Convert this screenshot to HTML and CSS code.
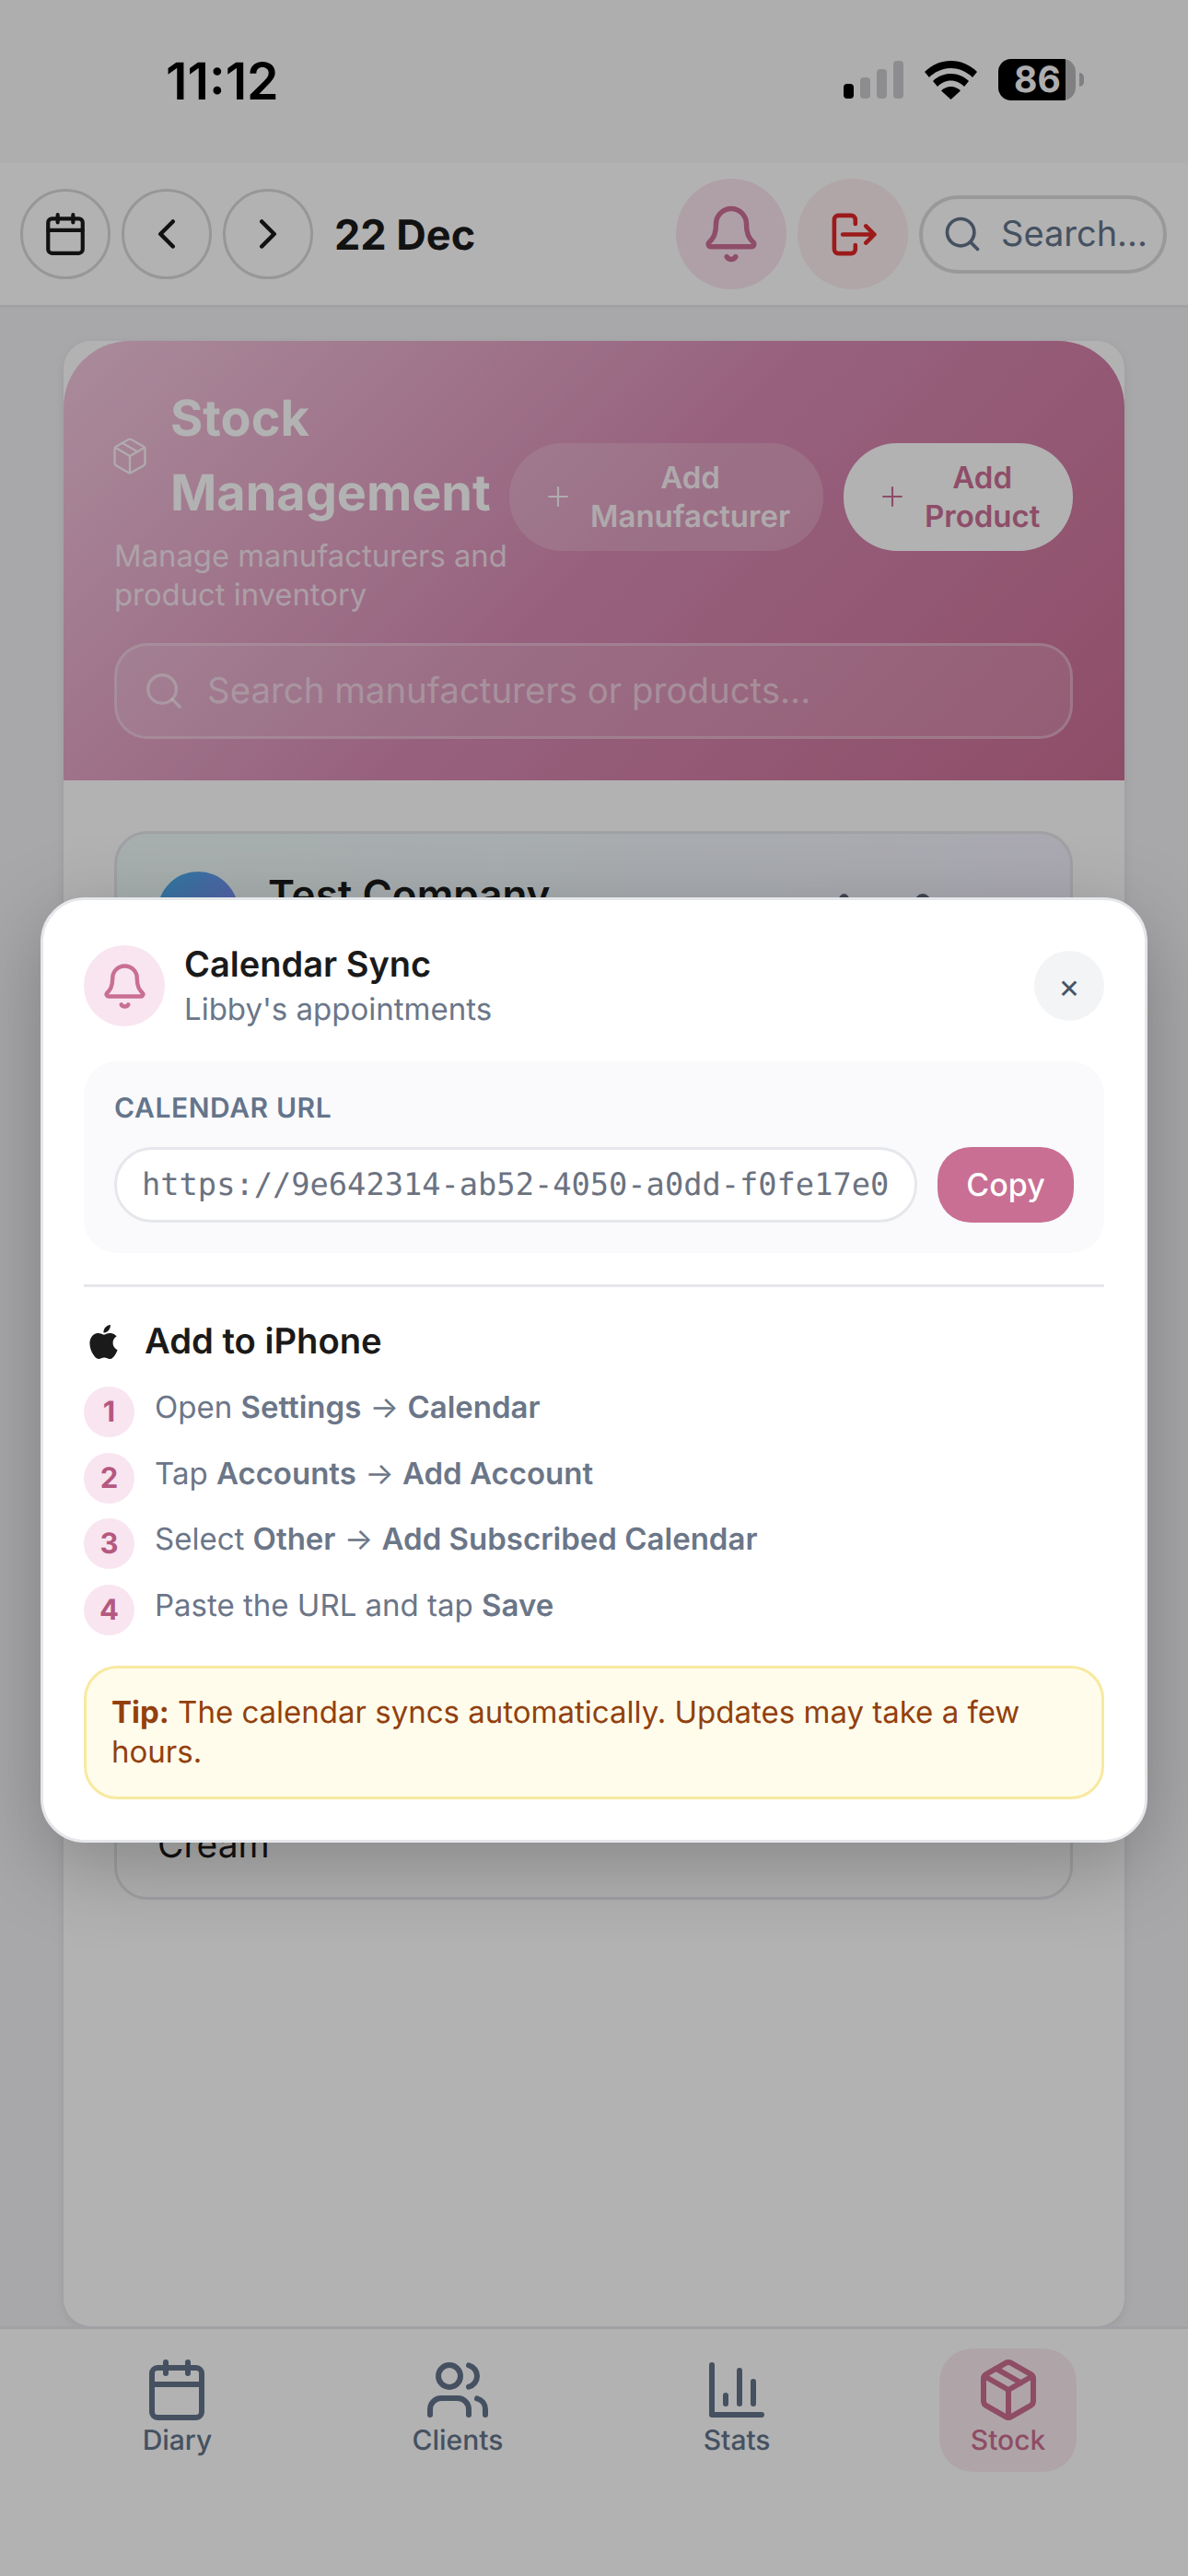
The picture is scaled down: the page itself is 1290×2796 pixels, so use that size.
FILE: index.html
```html
<!DOCTYPE html>
<html lang="en">
<head>
    <meta charset="UTF-8">
    <meta name="viewport" content="width=device-width, initial-scale=1.0">
    <title>Stock Management</title>
    <link rel="stylesheet" href="styles.css">
</head>
<body>

    <div class="status-bar">
        <span class="time">11:12</span>
        <div class="status-icons">
            <div class="signal">
                <span class="bar bar-1"></span>
                <span class="bar bar-2"></span>
                <span class="bar bar-3"></span>
                <span class="bar bar-4"></span>
            </div>
            <svg class="wifi" viewBox="0 0 57 42">
                <path d="M28.5 0C17.5 0 7.5 4.5 0 12l5 6c6-6 14.500-10 23.500-10S46 12 52 18l5-6C49.500 4.500 39.500 0 28.500 0z"/>
                <path d="M28.500 14c-7.500 0-14.500 3-19.500 8l5 6c4-4 9-6.500 14.500-6.500S39 24 43 28l5-6c-5-5-12-8-19.500-8z"/>
                <path d="M28.500 28c-4 0-7.500 1.500-10.500 4.500L28.500 42 39 32.500c-3-3-6.500-4.500-10.500-4.500z"/>
            </svg>
            <div class="battery">
                <div class="battery-body">86</div>
                <span class="battery-nub"></span>
            </div>
        </div>
    </div>

    <header class="top-bar">
        <button class="round-btn">
            <svg class="icon-cal" viewBox="0 0 24 24"><rect x="3" y="4" width="18" height="18" rx="2"/><path d="M16 2v4M8 2v4M3 10h18"/></svg>
        </button>
        <button class="round-btn">
            <svg class="icon-chev" viewBox="0 0 24 24"><path d="m15 18-6-6 6-6"/></svg>
        </button>
        <button class="round-btn">
            <svg class="icon-chev" viewBox="0 0 24 24"><path d="m9 18 6-6-6-6"/></svg>
        </button>
        <span class="date">22 Dec</span>
        <div class="top-actions">
            <button class="action-btn bell-btn">
                <svg class="icon-bell" viewBox="0 0 24 24"><path d="M10.268 21a2 2 0 0 0 3.464 0"/><path d="M3.262 15.326A1 1 0 0 0 4 17h16a1 1 0 0 0 .74-1.673C19.41 13.956 18 12.499 18 8A6 6 0 0 0 6 8c0 4.499-1.411 5.956-2.738 7.326"/></svg>
            </button>
            <button class="action-btn logout-btn">
                <svg class="icon-logout" viewBox="0 0 24 24"><path d="M13 7V5a2 2 0 0 0-2-2H5a2 2 0 0 0-2 2v14a2 2 0 0 0 2 2h6a2 2 0 0 0 2-2v-2"/><path d="M7 12h15M18 8l4 4-4 4"/></svg>
            </button>
            <div class="top-search">
                <svg class="icon-search" viewBox="0 0 24 24"><circle cx="11" cy="11" r="8"/><path d="m21 21-4.3-4.3"/></svg>
                <span class="top-search-text">Search...</span>
            </div>
        </div>
    </header>

    <main class="content">
        <section class="stock-card">
            <div class="stock-head">
                <div class="stock-head-row">
                    <div class="stock-title-block">
                        <div class="stock-title">
                            <svg class="icon-box" viewBox="0 0 24 24"><path d="M11 21.73a2 2 0 0 0 2 0l7-4A2 2 0 0 0 21 16V8a2 2 0 0 0-1-1.73l-7-4a2 2 0 0 0-2 0l-7 4A2 2 0 0 0 3 8v8a2 2 0 0 0 1 1.73z"/><path d="M12 22V12"/><path d="m3.3 7 8.7 5 8.7-5"/><path d="m7.5 4.27 9 5.15"/></svg>
                            <h1>Stock Management</h1>
                        </div>
                        <p class="stock-sub">Manage manufacturers and product inventory</p>
                    </div>
                    <div class="stock-buttons">
                        <button class="add-btn add-ghost">
                            <svg class="icon-plus" viewBox="0 0 24 24"><path d="M5 12h14M12 5v14"/></svg>
                            <span>Add<br>Manufacturer</span>
                        </button>
                        <button class="add-btn add-solid">
                            <svg class="icon-plus" viewBox="0 0 24 24"><path d="M5 12h14M12 5v14"/></svg>
                            <span>Add<br>Product</span>
                        </button>
                    </div>
                </div>
                <div class="stock-search">
                    <svg class="icon-stock-search" viewBox="0 0 24 24"><circle cx="11" cy="11" r="8"/><path d="m21 21-4.3-4.3"/></svg>
                    <span>Search manufacturers or products...</span>
                </div>
            </div>

            <div class="stock-body">
                <div class="company-card">
                    <div class="company-row">
                        <div class="company-avatar"></div>
                        <span class="company-name">Test Company</span>
                        <div class="company-tools">
                            <span class="tool tool-small"></span>
                            <span class="tool tool-wide"></span>
                        </div>
                    </div>
                    <div class="product-name">Cream</div>
                </div>
            </div>
        </section>
    </main>

    <nav class="tab-bar">
        <a class="tab">
            <svg viewBox="0 0 24 24"><rect x="3" y="4" width="18" height="18" rx="2"/><path d="M16 2v4M8 2v4M3 10h18"/></svg>
            <span>Diary</span>
        </a>
        <a class="tab">
            <svg viewBox="0 0 24 24"><path d="M16 21v-2a4 4 0 0 0-4-4H6a4 4 0 0 0-4 4v2"/><circle cx="9" cy="7" r="4"/><path d="M22 21v-2a4 4 0 0 0-3-3.87"/><path d="M16 3.13a4 4 0 0 1 0 7.75"/></svg>
            <span>Clients</span>
        </a>
        <a class="tab">
            <svg viewBox="0 0 24 24"><path d="M3 3v18h18"/><path d="M18 17V9M13 17V5M8 17v-3"/></svg>
            <span>Stats</span>
        </a>
        <a class="tab tab-active">
            <svg viewBox="0 0 24 24"><path d="M11 21.73a2 2 0 0 0 2 0l7-4A2 2 0 0 0 21 16V8a2 2 0 0 0-1-1.73l-7-4a2 2 0 0 0-2 0l-7 4A2 2 0 0 0 3 8v8a2 2 0 0 0 1 1.73z"/><path d="M12 22V12"/><path d="m3.3 7 8.7 5 8.7-5"/><path d="m7.5 4.27 9 5.15"/></svg>
            <span>Stock</span>
        </a>
    </nav>

    <div class="overlay">
        <div class="modal">
            <div class="modal-head">
                <div class="modal-bell">
                    <svg viewBox="0 0 24 24"><path d="M10.268 21a2 2 0 0 0 3.464 0"/><path d="M3.262 15.326A1 1 0 0 0 4 17h16a1 1 0 0 0 .74-1.673C19.41 13.956 18 12.499 18 8A6 6 0 0 0 6 8c0 4.499-1.411 5.956-2.738 7.326"/></svg>
                </div>
                <div class="modal-titles">
                    <h2>Calendar Sync</h2>
                    <p>Libby's appointments</p>
                </div>
                <button class="modal-close">×</button>
            </div>

            <div class="url-panel">
                <div class="url-label">CALENDAR URL</div>
                <div class="url-row">
                    <div class="url-input">https://9e642314-ab52-4050-a0dd-f0fe17e0</div>
                    <button class="copy-btn">Copy</button>
                </div>
            </div>

            <hr class="modal-line">

            <div class="add-head">
                <svg viewBox="0 0 24 24"><path d="M12.152 6.896c-.948 0-2.415-1.078-3.96-1.04-2.04.027-3.91 1.183-4.961 3.014-2.117 3.675-.546 9.103 1.519 12.09 1.013 1.454 2.208 3.09 3.792 3.039 1.52-.065 2.09-.987 3.935-.987 1.831 0 2.35.987 3.96.948 1.637-.026 2.676-1.48 3.676-2.948 1.156-1.688 1.636-3.325 1.662-3.415-.039-.013-3.182-1.221-3.22-4.857-.026-3.04 2.48-4.494 2.597-4.559-1.429-2.09-3.623-2.324-4.39-2.376-2-.156-3.675 1.09-4.61 1.09zM15.53 3.83c.843-1.012 1.4-2.427 1.245-3.83-1.207.052-2.662.805-3.532 1.818-.78.896-1.454 2.338-1.273 3.714 1.338.104 2.715-.688 3.559-1.701"/></svg>
                <h3>Add to iPhone</h3>
            </div>

            <ol class="steps">
                <li><span class="step-num">1</span><span class="step-text">Open <b>Settings</b> → <b>Calendar</b></span></li>
                <li><span class="step-num">2</span><span class="step-text">Tap <b>Accounts</b> → <b>Add Account</b></span></li>
                <li><span class="step-num">3</span><span class="step-text">Select <b>Other</b> → <b>Add Subscribed Calendar</b></span></li>
                <li><span class="step-num">4</span><span class="step-text">Paste the URL and tap <b>Save</b></span></li>
            </ol>

            <div class="tip"><b>Tip:</b> The calendar syncs automatically. Updates may take a few hours.</div>
        </div>
    </div>

</body>
</html>
```

FILE: styles.css
```css
* {
    box-sizing: border-box;
}

body {
    margin: 0;
    width: 1290px;
    height: 2796px;
    overflow: hidden;
    display: flex;
    flex-direction: column;
    background-color: #f1f1f4;
    color: #1a1a1a;
    font-family: 'Inter', sans-serif;
    text-rendering: geometricPrecision;
}

svg {
    fill: none;
    stroke: currentColor;
    stroke-width: 2;
    stroke-linecap: round;
    stroke-linejoin: round;
    flex-shrink: 0;
    display: block;
}

button {
    font-family: inherit;
    text-rendering: inherit;
    border: none;
    padding: 0;
}

/* status bar */
.status-bar {
    height: 177px;
    flex-shrink: 0;
    background-color: #f9f9fb;
    display: flex;
    justify-content: space-between;
    align-items: flex-start;
    padding: 58px 113px 0 180px;
}

.time {
    font-size: 55.500px;
    font-weight: 600;
    line-height: 62px;
    color: #000;
}

.status-icons {
    display: flex;
    align-items: center;
    gap: 23px;
    padding-top: 6px;
}

.signal {
    display: flex;
    align-items: flex-end;
    gap: 7px;
    height: 41px;
}

.bar {
    width: 11px;
    border-radius: 4px;
    background-color: #cbcbcd;
}

.bar-1 {
    height: 16px;
    background-color: #000;
}

.bar-2 {
    height: 23px;
}

.bar-3 {
    height: 32px;
}

.bar-4 {
    height: 41px;
}

.wifi {
    width: 57px;
    height: 42px;
    fill: #000;
    stroke: none;
}

.battery {
    display: flex;
    align-items: center;
    gap: 4px;
}

.battery-body {
    width: 84px;
    height: 45px;
    border-radius: 14px;
    background: linear-gradient(to right, #000 87%, #b8b8ba 87%);
    color: #f9f9fb;
    font-size: 39px;
    font-weight: 700;
    line-height: 45px;
    padding-left: 17px;
}

.battery-nub {
    width: 5px;
    height: 15px;
    border-radius: 0 5px 5px 0;
    background-color: #b8b8ba;
}

/* top bar */
.top-bar {
    height: 157px;
    flex-shrink: 0;
    background-color: #fff;
    border-bottom: 3px solid #e5e7eb;
    display: flex;
    align-items: center;
    padding: 0 23px 0 22px;
    gap: 12px;
}

.round-btn {
    width: 98px;
    height: 98px;
    border-radius: 50%;
    border: 3px solid #d8d8d8;
    background: transparent;
    color: #1a1a1a;
    display: flex;
    align-items: center;
    justify-content: center;
}

.icon-cal {
    width: 50px;
    height: 50px;
}

.icon-chev {
    width: 54px;
    height: 54px;
}

.date {
    font-size: 45px;
    font-weight: 700;
    margin-left: 11px;
}

.top-actions {
    margin-left: auto;
    display: flex;
    align-items: center;
    gap: 12px;
}

.action-btn {
    width: 120px;
    height: 120px;
    border-radius: 50%;
    display: flex;
    align-items: center;
    justify-content: center;
}

.bell-btn {
    background-color: #fbe5f0;
    color: #cc6f95;
}

.logout-btn {
    background-color: #fdeef0;
    color: #e02626;
}

.icon-bell {
    width: 66px;
    height: 66px;
}

.icon-logout {
    width: 55px;
    height: 55px;
}

.top-search {
    width: 269px;
    height: 85px;
    border-radius: 43px;
    border: 4px solid #dcdcdc;
    display: flex;
    align-items: center;
    gap: 20px;
    padding-left: 21px;
    overflow: hidden;
    color: #64748b;
}

.icon-search {
    width: 44px;
    height: 44px;
}

.top-search-text {
    font-size: 38px;
    white-space: nowrap;
}

/* stock card */
.content {
    flex: 1;
    min-height: 0;
    overflow: hidden;
    padding: 36px 69px 0;
}

.stock-card {
    height: 100%;
    background-color: #fff;
    border-radius: 30px;
    box-shadow: 0 3px 12px rgba(0, 0, 0, 0.08);
}

.stock-head {
    height: 477px;
    border-radius: 72px 72px 0 0;
    background: linear-gradient(135deg, #f3c8de 0%, #d98cb5 50%, #cc6f95 100%);
    padding: 44px 56px 45px 55px;
    color: #fff;
}

.stock-head-row {
    display: flex;
    align-items: center;
    justify-content: space-between;
}

.stock-title-block {
    width: 429px;
}

.stock-title {
    display: flex;
    align-items: center;
    gap: 22px;
    margin-left: -5px;
}

.icon-box {
    width: 44px;
    height: 44px;
    stroke-width: 1.3;
    opacity: 0.85;
}

.stock-title h1 {
    margin: 0;
    font-size: 54px;
    line-height: 81px;
    font-weight: 700;
    width: 360px;
}

.stock-sub {
    margin: 6px 0 0;
    font-size: 32.800px;
    line-height: 42px;
    color: rgba(255, 255, 255, 0.72);
}

.stock-buttons {
    display: flex;
    gap: 22px;
    margin-bottom: 2px;
}

.add-btn {
    height: 117px;
    border-radius: 58px;
    display: flex;
    align-items: center;
    gap: 18px;
    padding: 0 36px;
    font-size: 33px;
    line-height: 42px;
    font-weight: 600;
}

.add-ghost {
    width: 341px;
    background-color: rgba(255, 255, 255, 0.2);
    color: rgba(255, 255, 255, 0.9);
}

.add-solid {
    width: 249px;
    background-color: #fff;
    color: #cc6f95;
}

.icon-plus {
    width: 34px;
    height: 34px;
    stroke-width: 1.5;
}

.stock-search {
    margin-top: 32px;
    height: 104px;
    border-radius: 36px;
    border: 3px solid rgba(255, 255, 255, 0.3);
    background-color: rgba(255, 255, 255, 0.15);
    display: flex;
    align-items: center;
    gap: 24px;
    padding-left: 28px;
    font-size: 38.400px;
    color: rgba(255, 255, 255, 0.55);
}

.icon-stock-search {
    width: 46px;
    height: 46px;
    stroke-width: 1.7;
}

.stock-body {
    padding: 55px 56px 0 55px;
}

.company-card {
    height: 1160px;
    border: 3px solid #e5e7eb;
    border-radius: 36px;
    background: linear-gradient(to right, #f0fdfa 0%, #f5f3ff 100%) top / 100% 220px no-repeat;
    padding: 41px 44px 28px;
    display: flex;
    flex-direction: column;
    justify-content: space-between;
}

.company-row {
    display: flex;
    align-items: flex-start;
    gap: 32px;
}

.company-avatar {
    width: 88px;
    height: 88px;
    border-radius: 50%;
    background: linear-gradient(135deg, #3fb0e8, #9a7bf5);
}

.company-name {
    font-size: 44px;
    font-weight: 600;
    line-height: 50px;
}

.company-tools {
    margin-left: auto;
    margin-right: 107px;
    margin-top: 24px;
    display: flex;
    gap: 70px;
}

.tool {
    height: 20px;
    border-radius: 50%;
    background-color: #5b6376;
}

.tool-small {
    width: 13px;
}

.tool-wide {
    width: 18px;
}

.product-name {
    font-size: 39px;
    line-height: 56px;
}

/* tab bar */
.tab-bar {
    height: 271px;
    flex-shrink: 0;
    background-color: #fff;
    border-top: 3px solid #e5e7eb;
    display: flex;
    justify-content: space-around;
    align-items: flex-start;
    padding: 21px 46px 0;
}

.tab {
    height: 134px;
    padding: 9px 34px 0;
    border-radius: 36px;
    display: flex;
    flex-direction: column;
    align-items: center;
    color: #64748b;
    font-size: 30px;
    font-weight: 500;
}

.tab svg {
    width: 72px;
    height: 72px;
    margin-bottom: 1px;
    color: #64748b;
}

.tab-active {
    background-color: #fbedf3;
    color: #cc6f90;
}

.tab-active svg {
    color: #cc6f90;
}

/* calendar modal */
.overlay {
    position: absolute;
    left: 0;
    top: 0;
    width: 1290px;
    height: 2796px;
    background-color: rgba(0, 0, 0, 0.3);
    display: flex;
    justify-content: center;
    align-items: flex-start;
    padding-top: 974px;
}

.modal {
    width: 1202px;
    background-color: #fff;
    border: 3px solid #e5e7eb;
    border-radius: 48px;
    padding: 48px 44px 44px;
    box-shadow: 0 24px 90px rgba(0, 0, 0, 0.25);
}

.modal-head {
    display: flex;
    align-items: center;
    gap: 21px;
}

.modal-bell {
    width: 88px;
    height: 88px;
    border-radius: 50%;
    background-color: #f8e5f0;
    color: #c96f93;
    display: flex;
    align-items: center;
    justify-content: center;
}

.modal-bell svg {
    width: 53px;
    height: 53px;
}

.modal-titles {
    flex: 1;
}

.modal-titles h2 {
    margin: 0;
    font-size: 38px;
    line-height: 44px;
    font-weight: 600;
}

.modal-titles p {
    margin: 6px 0 0;
    font-size: 33px;
    line-height: 40px;
    color: #6b7688;
}

.modal-close {
    width: 76px;
    height: 76px;
    border-radius: 50%;
    background-color: #f3f4f6;
    color: #475569;
    font-size: 36px;
    line-height: 76px;
}

.url-panel {
    margin-top: 37px;
    height: 208px;
    border-radius: 36px;
    background-color: #fafafd;
    padding: 33px;
}

.url-label {
    font-size: 30px;
    font-weight: 600;
    line-height: 36px;
    letter-spacing: 0.6px;
    color: #64748b;
}

.url-row {
    display: flex;
    gap: 22px;
    margin-top: 24px;
}

.url-input {
    flex: 1;
    min-width: 0;
    height: 82px;
    border: 3px solid #e5e7eb;
    border-radius: 41px;
    background-color: #fff;
    padding-left: 27px;
    font-family: 'DejaVu Sans Mono', monospace;
    font-size: 33.700px;
    line-height: 76px;
    color: #6b7280;
    white-space: nowrap;
    overflow: hidden;
}

.copy-btn {
    width: 148px;
    height: 82px;
    border-radius: 36px;
    background-color: #c96f93;
    color: #fff;
    font-size: 34px;
    font-weight: 500;
}

.modal-line {
    margin: 34px 0 0;
    border: none;
    border-top: 3px solid #e5e7eb;
}

.add-head {
    display: flex;
    align-items: center;
    gap: 26px;
    margin-top: 35px;
    padding-left: 3px;
}

.add-head svg {
    width: 37px;
    height: 37px;
    fill: #1a1a1a;
    stroke: none;
}

.add-head h3 {
    margin: 0;
    font-size: 38.200px;
    line-height: 48px;
    font-weight: 600;
}

.steps {
    list-style: none;
    margin: 25px 0 0;
    padding: 0;
    display: flex;
    flex-direction: column;
    gap: 16.500px;
}

.steps li {
    display: flex;
    align-items: flex-start;
    gap: 22px;
    font-size: 33px;
    line-height: 42px;
    color: #6b7688;
}

.step-text {
    padding-top: 1px;
}

.steps b {
    font-weight: 600;
}

.step-num {
    width: 55px;
    height: 55px;
    flex-shrink: 0;
    border-radius: 50%;
    background-color: #f8e5f0;
    color: #b5587f;
    font-weight: 700;
    font-size: 31px;
    line-height: 55px;
    text-align: center;
}

.tip {
    margin-top: 33px;
    height: 145px;
    border: 3px solid #f8e9a0;
    border-radius: 36px;
    background-color: #fffceb;
    padding: 26px 27px;
    font-size: 33px;
    line-height: 43px;
    color: #92400e;
}

.tip b {
    font-weight: 700;
}
```
